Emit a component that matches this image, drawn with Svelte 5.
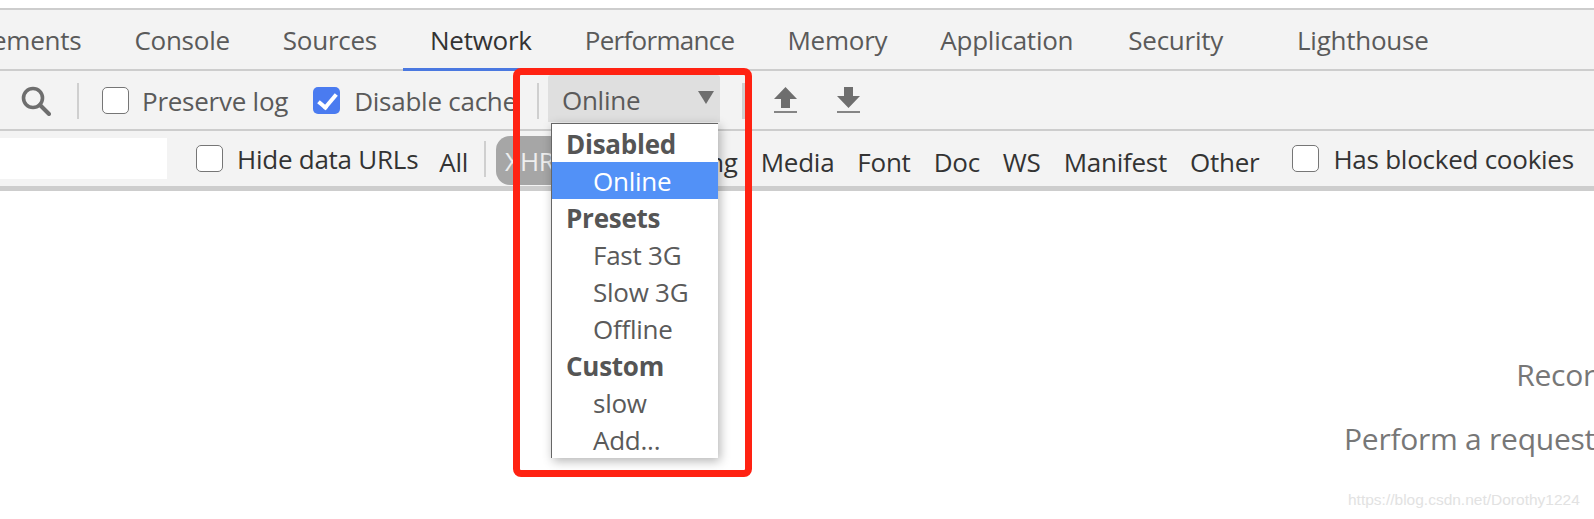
<script>
  const tabs = ['Elements', 'Console', 'Sources', 'Network', 'Performance', 'Memory', 'Application', 'Security', 'Lighthouse'];
  const types = ['JS', 'CSS', 'Img', 'Media', 'Font', 'Doc', 'WS', 'Manifest', 'Other'];
  const menu = [
    { label: 'Disabled', group: true },
    { label: 'Online', selected: true },
    { label: 'Presets', group: true },
    { label: 'Fast 3G' },
    { label: 'Slow 3G' },
    { label: 'Offline' },
    { label: 'Custom', group: true },
    { label: 'slow' },
    { label: 'Add...' }
  ];

  let preserveLog = $state(false);
  let disableCache = $state(true);
  let hideData = $state(false);
  let hasBlocked = $state(false);
</script>

<div class="page">
  <div class="tabs">
    {#each tabs as tab}
      <div class="tab" class:active={tab === 'Network'}>{tab}</div>
    {/each}
  </div>

  <div class="toolbar">
    <svg class="search" viewBox="0 0 30 30" width="30" height="30">
      <circle cx="12" cy="12" r="9.5" fill="none" stroke="#6e6e6e" stroke-width="3.6" />
      <path d="M19 19 L28 28" stroke="#6e6e6e" stroke-width="4" stroke-linecap="round" />
    </svg>
    <span class="sep first"></span>
    <label class="check preserve">
      <input type="checkbox" bind:checked={preserveLog} />
      <span>Preserve log</span>
    </label>
    <label class="check cache">
      <input type="checkbox" bind:checked={disableCache} />
      <span>Disable cache</span>
    </label>
    <span class="sep second"></span>
    <div class="select">
      <span>Online</span>
      <i class="caret"></i>
    </div>
    <span class="sep thick"></span>
    <svg class="arrow up" viewBox="0 0 23 26" width="23" height="26">
      <path d="M11.5 0 L23 12 H16 V21 H7 V12 H0 Z" fill="#6e6e6e" />
      <rect y="24" width="23" height="2" fill="#858585" />
    </svg>
    <svg class="arrow down" viewBox="0 0 23 26" width="23" height="26">
      <path d="M7 0 H16 V9 H23 L11.5 21 L0 9 H7 Z" fill="#6e6e6e" />
      <rect y="24" width="23" height="2" fill="#858585" />
    </svg>
  </div>

  <div class="filters">
    <div class="filter-input"></div>
    <label class="check hide">
      <input type="checkbox" bind:checked={hideData} />
      <span>Hide data URLs</span>
    </label>
    <span class="type all">All</span>
    <span class="sep filter-sep"></span>
    <span class="pill">XHR</span>
    <div class="types">
      {#each types as type}
        <span class="type">{type}</span>
      {/each}
    </div>
    <label class="check blocked">
      <input type="checkbox" bind:checked={hasBlocked} />
      <span>Has blocked cookies</span>
    </label>
  </div>

  <div class="empty">
    <p class="recording">Recording network activity…</p>
    <p>Perform a request or hit F5 to record the reload.</p>
  </div>

  <ul class="menu">
    {#each menu as item}
      <li class:group={item.group} class:selected={item.selected}>{item.label}</li>
    {/each}
  </ul>

  <div class="highlight"></div>
  <div class="watermark">https://blog.csdn.net/Dorothy1224</div>
</div>

<style>
  :global(body) {
    margin: 0;
    background: #fff;
  }

  .page {
    position: relative;
    width: 1594px;
    height: 519px;
    overflow: hidden;
    padding-top: 8px;
    box-sizing: border-box;
    font-family: "Open Sans", "Noto Sans", sans-serif;
    font-size: 26px;
    letter-spacing: -0.25px;
    color: #5a5a5a;
  }

  .tabs,
  .toolbar,
  .filters {
    display: flex;
    align-items: center;
    background: #f3f3f3;
    border-bottom: 2px solid #cdcdcd;
    white-space: nowrap;
  }

  .tabs {
    height: 59px;
    border-top: 2px solid #cdcdcd;
    align-items: stretch;
    margin-left: -55px;
  }

  .tab {
    display: flex;
    align-items: center;
    padding: 2px 26.5px 0;
    margin-bottom: -2px;
    border-bottom: 3px solid transparent;
  }

  .tab.active {
    color: #333;
    border-bottom-color: #4a78e0;
  }

  .tab:nth-child(5) {
    letter-spacing: -0.7px;
  }

  .tab:nth-child(8) {
    margin-left: 2px;
  }

  .tab:last-child {
    margin-left: 21px;
  }

  .toolbar {
    height: 58px;
  }

  .toolbar > span,
  .toolbar > label {
    margin-top: 1px;
  }

  .search {
    margin-left: 21px;
    margin-top: 2px;
    flex: none;
  }

  .sep {
    flex: none;
    width: 2px;
    height: 36px;
    background: #cfcfcf;
  }

  .sep.first {
    margin-left: 26px;
  }

  .sep.second {
    margin-left: 20px;
  }

  .sep.thick {
    width: 3px;
    margin-left: 22px;
  }

  .check {
    display: flex;
    align-items: center;
    flex: none;
  }

  .check input {
    appearance: none;
    width: 27px;
    height: 27px;
    margin: 0 14px 0 0;
    box-sizing: border-box;
    border: 1px solid #767676;
    border-radius: 5px;
    background: #fff;
    flex: none;
  }

  .check input:checked {
    border: none;
    background: #4a7bf0;
    position: relative;
  }

  .check input:checked::after {
    content: "";
    position: absolute;
    left: 9px;
    top: 3px;
    width: 7px;
    height: 15px;
    border: solid #fff;
    border-width: 0 4px 4px 0;
    transform: rotate(40deg);
  }

  .preserve {
    margin-left: 23px;
  }

  .preserve input {
    margin-right: 13px;
  }

  .cache {
    margin-left: 25px;
  }

  .select {
    flex: none;
    width: 172px;
    height: 47px;
    margin-left: 9px;
    margin-top: -4px;
    box-sizing: border-box;
    padding: 3px 6px 0 14px;
    display: flex;
    align-items: center;
    justify-content: space-between;
    background: #dfdfdf;
    border-radius: 3px 3px 0 0;
  }

  .caret {
    width: 0;
    height: 0;
    margin-bottom: 4px;
    border-left: 8px solid transparent;
    border-right: 8px solid transparent;
    border-top: 13px solid #6e6e6e;
  }

  .arrow {
    flex: none;
  }

  .arrow.up {
    margin-left: 29px;
  }

  .arrow.down {
    margin-left: 40px;
  }

  .filters {
    height: 55px;
    border-bottom-width: 5px;
    color: #333;
  }

  .filter-input {
    flex: none;
    width: 167px;
    height: 41px;
    margin-top: -1px;
    background: #fff;
  }

  .hide {
    margin-left: 29px;
  }

  .type {
    flex: none;
    margin-top: 7px;
  }

  .all {
    margin-left: 21px;
  }

  .filter-sep {
    margin-left: 16px;
    margin-top: 1px;
  }

  .pill {
    flex: none;
    width: 76px;
    height: 49px;
    margin-left: 10px;
    margin-top: 4px;
    box-sizing: border-box;
    padding-left: 9px;
    display: flex;
    align-items: center;
    border-radius: 14px;
    background: #a6a6a6;
    color: #eee;
  }

  .types {
    flex: none;
    display: flex;
    gap: 23px;
    margin-left: 10px;
  }

  .blocked {
    margin-left: 33px;
  }

  .empty {
    width: 660px;
    margin-left: 1344px;
    padding-top: 163px;
    font-size: 30px;
    text-align: center;
    white-space: nowrap;
    color: #777;
  }

  .empty p {
    margin: 0 0 23px;
  }

  .empty .recording {
    padding-left: 70px;
  }

  /* overlays: open dropdown, red annotation, watermark */
  .menu {
    position: absolute;
    left: 551px;
    top: 123px;
    width: 167px;
    height: 335px;
    margin: 0;
    padding: 1px 0 0;
    box-sizing: border-box;
    list-style: none;
    background: #fff;
    border-left: 1px solid #666;
    border-top: 1px solid #666;
    box-shadow: 2px 3px 10px rgba(0, 0, 0, 0.3);
  }

  .menu li {
    height: 36px;
    padding-top: 1px;
    line-height: 37px;
    padding-left: 41px;
    color: #5a5a5a;
  }

  .menu li.group {
    padding-left: 14px;
    font-weight: 700;
    color: #555;
  }

  .menu li.selected {
    background: #5291f7;
    color: #fff;
  }

  .highlight {
    position: absolute;
    left: 513px;
    top: 68px;
    width: 239px;
    height: 409px;
    box-sizing: border-box;
    border: 7px solid #ff2212;
    border-radius: 8px;
  }

  .watermark {
    position: absolute;
    left: 1348px;
    top: 491px;
    font-family: "Liberation Sans", Arial, sans-serif;
    font-size: 15.5px;
    letter-spacing: 0;
    color: #e2e2e2;
    white-space: nowrap;
  }
</style>
